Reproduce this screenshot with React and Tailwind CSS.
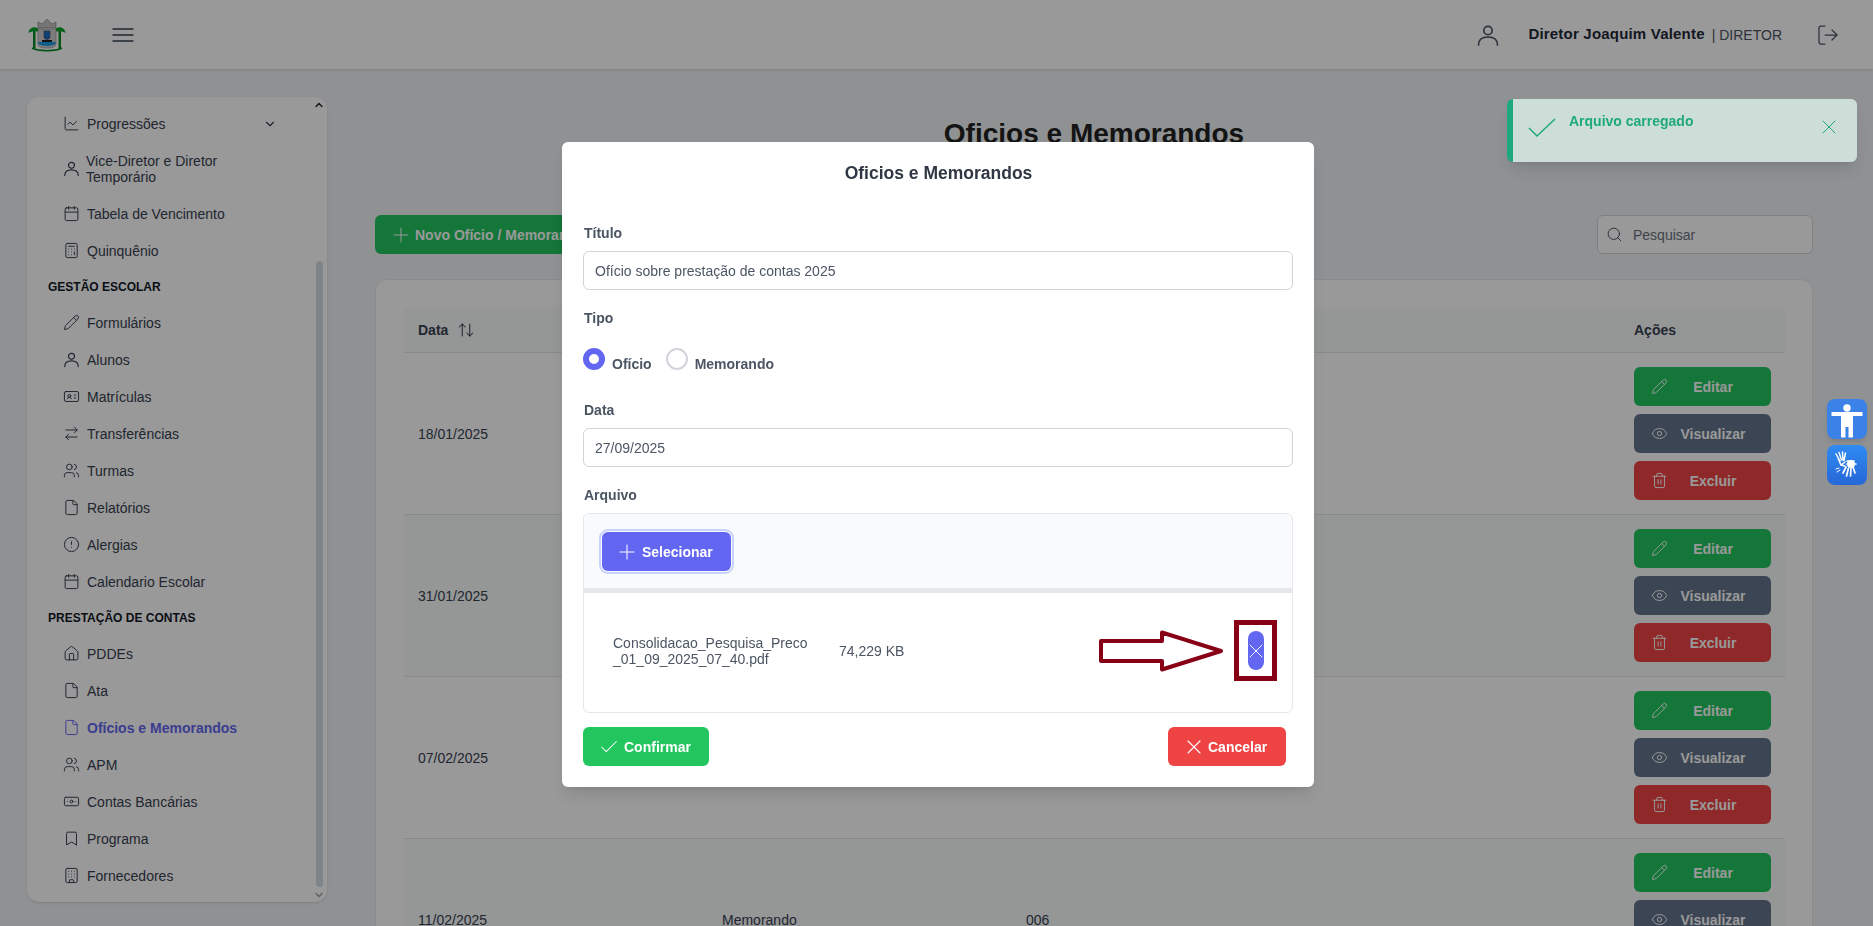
import React from "react";
import {
  ChartLine, ChevronDown, ChevronUp, Calendar, Calculator, Pencil, IdCard, ArrowRightLeft, Users,
  File, CircleAlert, House, Banknote, Bookmark, Building, Check, X, Plus, Trash2, Eye, Search, LogOut, ArrowUpDown,
} from "lucide-react";

function UserIcon({ size = 16, className = "" }) {
  return (
    <svg width={size} height={size} viewBox="0 0 24 24" fill="none" stroke="currentColor" strokeWidth="1.7" strokeLinecap="round" className={className}>
      <circle cx="12" cy="7.500" r="4.200" />
      <path d="M2.500 22c0-5 3-8 9.500-8s9.500 3 9.500 8" />
    </svg>
  );
}

function Logo() {
  return (
    <svg width="38" height="34" viewBox="0 0 38 34" className="shrink-0">
      <path d="M10 10 L10 4 L14 6 L19 1 L24 6 L28 4 L28 10 Z" fill="#c4c4c4" stroke="#666" strokeWidth="0.500" />
      <path d="M0.500 15c0-6 8-8 11-3v2c-3-1-8-1-11 1z" fill="#0aa52c" />
      <path d="M37.500 15c0-6-8-8-11-3v2c3-1 8-1 11 1z" fill="#0aa52c" />
      <path d="M5 13h2.500v17H5zM30.500 13H33v17h-2.500z" fill="#0a8a28" />
      <path d="M10 11h18v15c0 3-4 4-9 4s-9-1-9-4z" fill="#cfcfcf" stroke="#777" strokeWidth="0.500" />
      <path d="M16 13h6v6c0 1.500-1.500 2.500-3 2.500s-3-1-3-2.500z" fill="#1f6fbf" stroke="#333" strokeWidth="0.500" />
      <path d="M10.500 24h17v2c-4 2.500-13 2.500-17 0z" fill="#1a9be6" />
      <path d="M14 22h10v2H14z" fill="#222" />
      <path d="M4 30c6 3.500 24 3.500 30 0" fill="none" stroke="#0a8a28" strokeWidth="1.500" />
    </svg>
  );
}

function Row({ icon: Icon, children, active, right }) {
  return (
    <div className={`flex items-center pl-[36px] pr-[37px] py-[10.5px] text-sm leading-4 ${active ? "font-bold text-[#6366f1]" : "text-[#374151]"}`}>
      <Icon size={17} strokeWidth={1.4} className="shrink-0 my-[-1px]" />
      <span className="ml-[7px] flex-1">{children}</span>
      {right}
    </div>
  );
}

function Section({ children }) {
  return <div className="pl-[21px] h-[35px] flex items-center text-[12px] font-bold text-[#111827]">{children}</div>;
}

function Sidebar() {
  return (
    <aside className="relative w-[300px] h-[805px] shrink-0 bg-white rounded-xl shadow overflow-hidden pt-[8px]">
      <Row icon={ChartLine} right={<ChevronDown size={14} strokeWidth={2} className="mr-[13px] my-[-1px]" />}>Progressões</Row>
      <Row icon={UserIcon}>
        <span className="block ml-[-1px]">Vice-Diretor e Diretor<br />Temporário</span>
      </Row>
      <Row icon={Calendar}>Tabela de Vencimento</Row>
      <Row icon={Calculator}>Quinquênio</Row>
      <Section>GESTÃO ESCOLAR</Section>
      <Row icon={Pencil}>Formulários</Row>
      <Row icon={UserIcon}>Alunos</Row>
      <Row icon={IdCard}>Matrículas</Row>
      <Row icon={ArrowRightLeft}>Transferências</Row>
      <Row icon={Users}>Turmas</Row>
      <Row icon={File}>Relatórios</Row>
      <Row icon={CircleAlert}>Alergias</Row>
      <Row icon={Calendar}>Calendario Escolar</Row>
      <Section>PRESTAÇÃO DE CONTAS</Section>
      <Row icon={House}>PDDEs</Row>
      <Row icon={File}>Ata</Row>
      <Row icon={File} active>Ofícios e Memorandos</Row>
      <Row icon={Users}>APM</Row>
      <Row icon={Banknote}>Contas Bancárias</Row>
      <Row icon={Bookmark}>Programa</Row>
      <Row icon={Building}>Fornecedores</Row>
      <ChevronUp size={12} strokeWidth={3} className="absolute right-[2px] top-[2px] text-[#1f2937]" />
      <div className="absolute right-[4px] top-[164px] w-[7px] h-[626px] rounded bg-[#d4dce6]" />
      <ChevronDown size={12} strokeWidth={3} className="absolute right-[2px] bottom-[1px] text-[#9ca3af]" />
    </aside>
  );
}

function ActionBtn({ icon: Icon, color, children }) {
  return (
    <div className={`flex items-center h-[39px] rounded-md pl-[17px] pr-[13px] text-sm font-bold text-white ${color}`}>
      <Icon size={17} strokeWidth={1.4} className="shrink-0" />
      <span className="flex-1 text-center">{children}</span>
    </div>
  );
}

function TableRow({ date, tipo, num, striped }) {
  return (
    <div className={`grid grid-cols-[304px_304px_608px_165px] h-[162px] items-center border-b border-[#e5e7eb] text-sm text-[#374151] ${striped ? "bg-[#f9fafb]" : "bg-white"}`}>
      <div className="pl-[14px]">{date}</div>
      <div className="pl-[14px]">{tipo}</div>
      <div className="pl-[14px]">{num}</div>
      <div className="pl-[14px] pr-[14px] flex flex-col gap-[8px]">
        <ActionBtn icon={Pencil} color="bg-[#22c55e]">Editar</ActionBtn>
        <ActionBtn icon={Eye} color="bg-[#64748b]">Visualizar</ActionBtn>
        <ActionBtn icon={Trash2} color="bg-[#ef4444]">Excluir</ActionBtn>
      </div>
    </div>
  );
}

function Main() {
  return (
    <main className="ml-[48px] w-[1438px] shrink-0">
      <h1 className="text-center text-[28px] leading-[34px] font-bold text-[#222222] mt-[-1px]">Oficios e Memorandos</h1>
      <div className="flex items-center justify-between mt-[64px]">
        <div className="flex items-center h-[39px] w-[240px] rounded-md bg-[#22c55e] text-white text-sm font-bold pl-[14px] whitespace-nowrap">
          <Plus size={24} strokeWidth={1} />
          <span className="ml-[2px]">Novo Ofício / Memorando</span>
        </div>
        <div className="flex items-center h-[39px] w-[216px] rounded-md border border-[#d1d5db] bg-white pl-[8px]">
          <Search size={17} strokeWidth={1.4} className="text-[#4b5563] shrink-0" />
          <input placeholder="Pesquisar" className="ml-[10px] w-[150px] text-sm outline-none placeholder:text-[#6b7280]" />
        </div>
      </div>
      <div className="mt-[25px] rounded-xl border border-[#e5e7eb] bg-white pt-[28px] pl-[28px] pr-[27px]">
        <div className="grid grid-cols-[304px_304px_608px_165px] h-[45px] items-center bg-[#f9fafb] border-b border-[#e5e7eb] text-sm font-bold text-[#374151]">
          <div className="pl-[14px] flex items-center gap-[9px]">Data <ArrowUpDown size={18} strokeWidth={1.4} /></div>
          <div className="pl-[14px]">Tipo</div>
          <div className="pl-[14px]">Número</div>
          <div className="pl-[14px]">Ações</div>
        </div>
        <TableRow date="18/01/2025" tipo="Ofício" num="003" />
        <TableRow date="31/01/2025" tipo="Ofício" num="004" striped />
        <TableRow date="07/02/2025" tipo="Ofício" num="005" />
        <TableRow date="11/02/2025" tipo="Memorando" num="006" striped />
      </div>
    </main>
  );
}

function Label({ children }) {
  return <label className="block text-sm leading-4 font-bold text-[#4b5563]">{children}</label>;
}

function Field({ value }) {
  return <input readOnly value={value} className="mt-[10px] block w-full h-[39px] rounded-md border border-[#d1d5db] px-[11px] text-sm text-[#4b5563] outline-none" />;
}

function Modal() {
  return (
    <div className="absolute left-[562px] top-[142px] z-20 w-[752px] h-[645px] rounded-md bg-white shadow-lg pl-[21px] pr-[21px] pt-[21px]">
      <h2 className="text-center text-[17.5px] leading-5 font-semibold text-[#2f3744] ml-[1px]">Oficios e Memorandos</h2>
      <div className="mt-[42px] pl-[1px]"><Label>Título</Label></div>
      <Field value="Ofício sobre prestação de contas 2025" />
      <div className="mt-[20px] pl-[1px]"><Label>Tipo</Label></div>
      <div className="mt-[22px] flex h-[22px]">
        <span className="w-[22px] h-[22px] rounded-full border-[6px] border-[#6366f1] bg-white" />
        <span className="ml-[7px] mt-[8px] text-sm leading-4 font-bold text-[#4b5563]">Ofício</span>
        <span className="ml-[14px] w-[22px] h-[22px] rounded-full border-2 border-[#d1d5db] bg-white" />
        <span className="ml-[7px] mt-[8px] text-sm leading-4 font-bold text-[#4b5563]">Memorando</span>
      </div>
      <div className="mt-[32px] pl-[1px]"><Label>Data</Label></div>
      <Field value="27/09/2025" />
      <div className="mt-[20px] pl-[1px]"><Label>Arquivo</Label></div>
      <div className="mt-[10px] h-[200px] rounded-md border border-[#e5e7eb] overflow-hidden">
        <div className="h-[79px] bg-[#f9fafb] border-b-[5px] border-[#e5e7eb] pl-[18px] pt-[18px]">
          <div className="flex items-center w-[129px] h-[39px] rounded-md bg-[#6366f1] ring-2 ring-[#c7d2fe] ring-offset-1 ring-offset-[#f9fafb] pl-[13px] text-sm font-bold text-white">
            <Plus size={24} strokeWidth={1} />
            <span className="ml-[3px]">Selecionar</span>
          </div>
        </div>
        <div className="flex items-center pl-[29px] pr-[28px] pt-[38px]">
          <div className="w-[197px] break-all text-sm leading-4 text-[#4b5563]">Consolidacao_Pesquisa_Preco_01_09_2025_07_40.pdf</div>
          <div className="ml-[29px] text-sm text-[#4b5563]">74,229 KB</div>
          <div className="ml-auto flex items-center justify-center w-[16px] h-[39px] rounded-lg bg-[#6366f1] text-white">
            <X size={24} strokeWidth={1} className="shrink-0" />
          </div>
        </div>
      </div>
      <div className="mt-[14px] flex justify-between pr-[7px]">
        <div className="flex items-center w-[126px] h-[39px] rounded-md bg-[#22c55e] pl-[15px] text-sm font-bold text-white">
          <Check size={22} strokeWidth={1.1} />
          <span className="ml-[4px]">Confirmar</span>
        </div>
        <div className="flex items-center w-[118px] h-[39px] rounded-md bg-[#ef4444] pl-[14px] text-sm font-bold text-white">
          <X size={24} strokeWidth={1.1} />
          <span className="ml-[2px]">Cancelar</span>
        </div>
      </div>
    </div>
  );
}

function Annotation() {
  return (
    <svg width="190" height="70" viewBox="0 0 190 70" fill="none" stroke="#880015" className="absolute left-[1095px] top-[616px] z-30">
      <path d="M6 25 H67 V16.500 L126 35 L67 53.500 V45 H6 Z" strokeWidth="4" strokeLinejoin="round" />
      <rect x="141.500" y="6.500" width="38" height="56" strokeWidth="5" />
    </svg>
  );
}

function Toast() {
  return (
    <div className="absolute left-[1507px] top-[99px] z-20 flex w-[350px] h-[63px] rounded-md overflow-hidden border-l-[6px] border-[#1ea97c] bg-[#cdddd8] shadow-lg text-[#1ea97c]">
      <svg width="28" height="20" viewBox="0 0 28 20" fill="none" stroke="currentColor" strokeWidth="1.500" className="ml-[15px] mt-[19px] shrink-0">
        <path d="M1 10 L9 18 L27 1" />
      </svg>
      <span className="ml-[13px] mt-[14px] text-sm leading-4 font-bold">Arquivo carregado</span>
      <X size={24} strokeWidth={1} className="ml-auto mr-[16px] mt-[16px]" />
    </div>
  );
}

function A11y() {
  return (
    <div className="absolute left-[1827px] top-[399px] z-20 flex flex-col gap-[6px]">
      <div className="w-[40px] h-[40px] rounded-lg bg-[#3b82e8] shadow-md">
        <svg width="40" height="40" viewBox="0 0 40 40" fill="white">
          <circle cx="20" cy="9" r="3.700" />
          <path d="M4.500 13h31v4H26v21.500h-4.500V28h-3v10.500H14V17H4.500z" />
        </svg>
      </div>
      <div className="w-[40px] h-[40px] rounded-lg bg-gradient-to-b from-[#2f8bf2] to-[#2767d8] flex items-center justify-center">
        <svg width="28" height="28" viewBox="0 0 28 28" fill="none" stroke="white" strokeWidth="1.500" strokeLinecap="round">
          <path d="M3 3 L7 10 M6 1.500 L8.500 9 M9.500 1 L10 9 M12.500 2 L11 9.500 M8 14 L12 11 M5 7 L8 14 L12 15" />
          <path d="M14 10 h7 M14 13 h9 M13 16 l-3 6 M15.500 17 l-2 8 M18 17 l-.5 8 M20 16 l2 6" strokeWidth="1.700" />
          <circle cx="18" cy="13" r="4" fill="white" stroke="none" />
          <path d="M3 18 L6 17 M4 21 L7 19" strokeWidth="1" />
        </svg>
      </div>
    </div>
  );
}

export default function App() {
  return (
    <div className="relative h-[926px] w-[1873px] overflow-hidden bg-[#eff2f6] font-['Liberation_Sans',Arial,sans-serif]">
      <header className="flex items-center h-[69px] bg-white shadow pl-[28px] pr-[33px] text-[#374151]">
        <Logo />
        <svg width="22" height="14" viewBox="0 0 22 14" fill="none" stroke="currentColor" strokeWidth="1.500" className="ml-[46px]">
          <path d="M0.500 1H21.500M0.500 7H21.500M0.500 13H21.500" />
        </svg>
        <UserIcon size={24} className="ml-auto text-[#4b5563]" />
        <span className="ml-[28px] text-[15px] font-bold text-[#1f2937] tracking-[0.2px]">Diretor Joaquim Valente</span>
        <span className="ml-[7px] text-sm text-[#4b5563]">| DIRETOR</span>
        <LogOut size={24} strokeWidth={1.25} className="ml-[34px] text-[#4b5563]" />
      </header>
      <div className="flex items-start pl-[27px] pt-[28px]">
        <Sidebar />
        <div className="mt-[21px]"><Main /></div>
      </div>
      <div className="fixed inset-0 z-10 bg-black/40" />
      <Modal />
      <Annotation />
      <Toast />
      <A11y />
    </div>
  );
}
